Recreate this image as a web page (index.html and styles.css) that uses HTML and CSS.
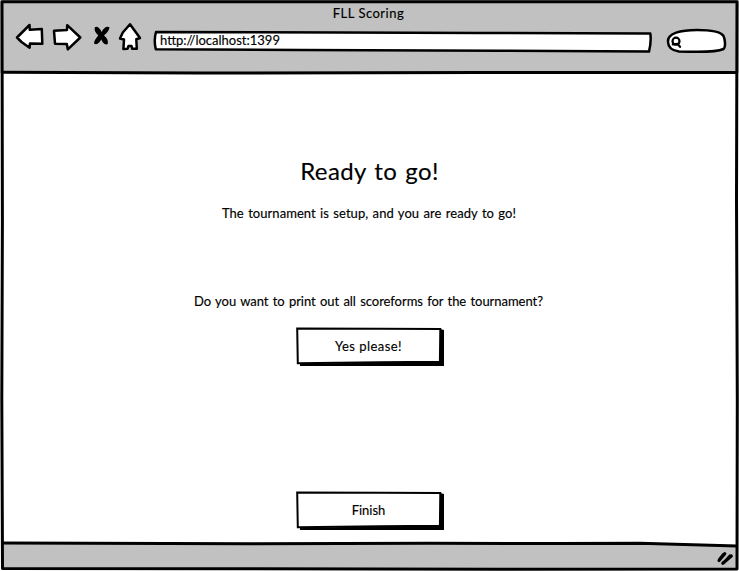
FILE: index.html
```
<!DOCTYPE html>
<html lang="en">
<head>
<meta charset="utf-8">
<title>FLL Scoring</title>
<link rel="stylesheet" href="styles.css">
</head>
<body>
<div class="window">
  <header class="chrome">
    <div class="title"><span>FLL Scoring</span></div>
    <div class="toolbar">
      <svg class="nav" width="130" height="32" viewBox="14 21 130 32">
        <g class="ink">
          <path d="M17 37.5 L29.5 25 L29.8 29.8 L41.8 29 L42.3 43.7 L30 43.4 L29.6 47.7 L21.5 42Z"/>
          <path d="M54 30.8 L67 30 L67.2 25.2 L80.3 37.5 L67.8 49.3 L66.8 44 L55 43.7Z"/>
          <path d="M130 24.3 L140 38 L136.3 39.3 L136.8 48.8 L132.3 48.8 L131.5 46 L128.5 46 L127.5 48.8 L123.4 48.9 L124 39.5 L120 38.5 L122.8 32.5Z"/>
        </g>
        <path class="cross" d="M94.8 27.2 C96.5 26 99 26.5 101.7 32 C103.5 27.5 107 25.5 109.6 27.3 C109 31 106.5 33.5 104 35.5 C106.8 37.5 108.5 40.5 107.8 44 C104.5 45.5 102.5 42.5 101.3 39.5 C99.2 43 97 45.3 94 43.5 C94 40.5 96.5 37.5 98.3 35.5 C95.5 33 94 30 94.8 27.2Z"/>
      </svg>
      <div class="address">
        <svg width="500" height="24" viewBox="152 29 500 24"><path class="ink" d="M156 32 L340 32.6 L480 33 L650.3 33.5 Q651.5 41 649 51.6 L500 50.8 L300 50 L155.8 49.2 Q153.6 40 156 32Z"/></svg>
        <span>http://localhost:1399</span>
      </div>
      <svg class="search" width="62" height="28" viewBox="665 27 62 28">
        <path class="ink" d="M668 42 C667 33 681 30 697 30 C713 30 721 32 723.5 36 C725 39 726 47 723.5 49 C716 52.5 697 52.2 679 51.4 C671 50.5 668.2 47 668 42Z"/>
        <circle class="lens" cx="676" cy="41.2" r="3.5"/><path class="lens" d="M672.8 44.3 L677.5 43.9 L680 46.8"/>
      </svg>
    </div>
  </header>
  <main class="page">
    <h1><span>Ready to go!</span></h1>
    <p class="intro"><span>The tournament is setup, and you are ready to go!</span></p>
    <p class="question"><span>Do you want to print out all scoreforms for the tournament?</span></p>
    <button class="button yes">
      <svg width="150" height="40" viewBox="295 326 150 40"><path d="M440 329 L444 330 L444 366 L300 366.6 L300 364 L296.5 364 L440 361Z"/><path class="box" d="M297.2 328.4 L380 328.7 L440.3 328.9 L439.9 361.8 L380 362.2 L297.8 363.3Z"/></svg>
      <span>Yes please!</span>
    </button>
    <button class="button finish">
      <svg width="150" height="40" viewBox="295 326 150 40"><path d="M440 329 L444 330 L444 366 L300 366.6 L300 364 L296.5 364 L440 361Z"/><path class="box" d="M297.2 328.4 L380 328.7 L440.3 328.9 L439.9 361.8 L380 362.2 L297.8 363.3Z"/></svg>
      <span>Finish</span>
    </button>
  </main>
  <svg class="frame" width="739" height="571" viewBox="0 0 739 571">
    <path class="status" d="M2 543 L250 543.8 L430 543.2 L560 543.6 L640 543.2 L737 546 L737 569 L2 568.6Z"/>
    <path class="line" d="M2 1.8 L737 1.8 L736.5 200 L737.3 400 L737 568.9 L500 569.2 L250 568.7 L2.5 568.5 L1.8 400 L2.4 220Z"/>
    <path class="line" d="M2 72.3 L200 73 L480 72.6 L737 72.4"/>
    <path class="line" d="M2 543 L250 543.8 L430 543.2 L560 543.6 L640 543.2 L737 546"/>
    <path class="grip" d="M719 560.5 L724.8 553.8 M722.8 563.3 L731.3 556 M719.5 559.5 L723.5 554.5 M724 562.5 L730 556"/>
  </svg>
</div>
</body>
</html>
```
FILE: styles.css
```
* { box-sizing: border-box; }
body { margin: 0; background: #fff; color: #000; font: 13px/18px Lato, sans-serif; -webkit-text-stroke: .15px #000; }
svg { display: block; }
.window { position: relative; width: 739px; height: 571px; display: flex; flex-direction: column; overflow: hidden; }
.frame { position: absolute; inset: 0; pointer-events: none; }
.line { fill: none; stroke: #000; stroke-width: 3; stroke-linejoin: round; }
.status { fill: #c1c1c1; }
.grip { fill: none; stroke: #000; stroke-width: 3.2; stroke-linecap: round; }
.chrome { height: 73px; background: #c1c1c1; }
.title { height: 21px; padding: 4px 2px 0 0; text-align: center; letter-spacing: .5px; }
.toolbar { display: flex; align-items: flex-start; padding-left: 14px; }
.ink { fill: #fff; stroke: #000; stroke-width: 2.5; stroke-linejoin: round; }
.lens { fill: none; stroke: #000; stroke-width: 2.2; stroke-linecap: round; }
.address { display: grid; margin: 8px 0 0 8px; }
.address > * { grid-area: 1 / 1; }
.address span { padding: 2px 0 0 8px; letter-spacing: 0; }
.search { margin: 6px 0 0 13px; }
.page { flex: 1; display: flex; flex-direction: column; align-items: center; }
h1 { margin: 83px 0 0; font-size: 24px; line-height: 30px; font-weight: 400; letter-spacing: .4px; word-spacing: 1.5px; }
p { margin: 0; }
.intro { margin-top: 18px; letter-spacing: .05px; word-spacing: 1px; padding-right: 1px; }
.question { margin-top: 70px; letter-spacing: -.04px; word-spacing: 1px; padding-right: 2px; }
.button { display: grid; width: 150px; height: 40px; padding: 0; border: 0; background: none; color: inherit; font: inherit; letter-spacing: .45px; }
.button > * { grid-area: 1 / 1; }
.button span { padding: 11px 2px 0 0; text-align: center; }
.box { fill: #fff; stroke: #000; stroke-width: 2; }
.yes { margin-top: 16px; }
.finish { margin-top: 124px; letter-spacing: 0; }
```
